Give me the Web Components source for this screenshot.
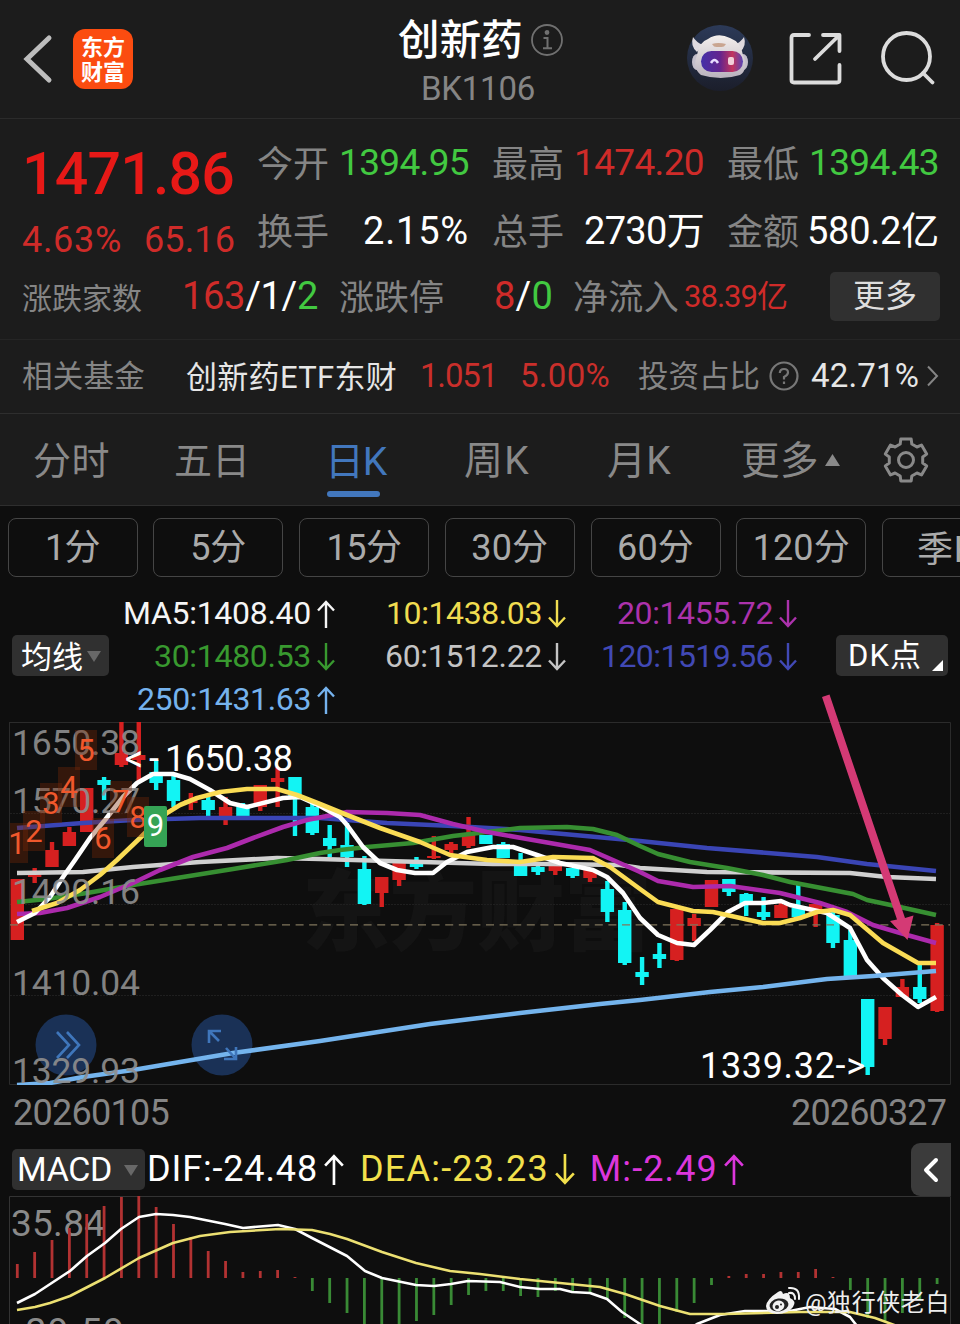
<!DOCTYPE html>
<html lang="zh-CN">
<head>
<meta charset="UTF-8">
<title>创新药 BK1106</title>
<style>
    body {
        margin:0;
        background:#0e0e0e;
        font-family:Roboto, "Noto Sans CJK SC", sans-serif;
        overflow:hidden;
    }
</style>
</head>
<body>
<stock-page></stock-page>

<script>
const define = (name, html, setup) => {
    const template = document.createElement("template");
    template.innerHTML = html.trim();
    customElements.define(name, class extends HTMLElement {
        constructor() {
            super();
            this.attachShadow({ mode: "open" }).append(template.content.cloneNode(true));
        }

        connectedCallback() {
            if (setup) setup(this, this.shadowRoot);
        }
    });
};

// one line of text, tracked out (or in) to the width in "w"
define("fit-text", `
    <style>
        :host { display:block; flex:none; white-space:nowrap; line-height:1.2; }
        span { display:inline-block; vertical-align:top; }
    </style>
    <span><slot></slot></span>
`, (el, root) => {
    const width = Number(el.getAttribute("w"));
    const size = el.getAttribute("size");
    if (size) el.style.fontSize = size + "px";
    // Chinese glyphs sit higher than the digits in a Roboto line box
    if (!/[0-9]/.test(el.textContent) && /[^\x00-\x7f]/.test(el.textContent)) {
        root.querySelector("span").style.transform = "translateY(1.5px)";
    }
    if (!width) return;
    const count = [...el.textContent].length;
    const natural = root.querySelector("span").getBoundingClientRect().width;
    el.style.letterSpacing = (width - natural) / count + "px";
    el.style.width = width + "px";
});

define("app-logo", `
    <style>
        :host {
            display:flex; flex-direction:column; justify-content:center; align-items:center;
            width:60px; height:60px; border-radius:12px; background:#fb4c10; color:#fff;
            font:700 22px/25px "Noto Sans CJK SC", sans-serif;
        }
        span { transform:translateY(-1.500px); }
    </style>
    <span>东方</span><span>财富</span>
`);

define("robot-avatar", `
    <style>:host { display:block; width:66px; height:66px; }</style>
    <svg width="66" height="66" viewBox="0 0 66 66">
        <defs>
            <linearGradient id="sky" x2="0" y2="1"><stop stop-color="#2c3a58"/><stop offset="1" stop-color="#1b1e2b"/></linearGradient>
            <linearGradient id="visor"><stop stop-color="#4430a8"/><stop offset=".45" stop-color="#63248e"/><stop offset=".75" stop-color="#c2345e"/><stop offset="1" stop-color="#5744b4"/></linearGradient>
            <linearGradient id="shell" x2="0" y2="1"><stop stop-color="#f4efed"/><stop offset="1" stop-color="#b9b2bd"/></linearGradient>
        </defs>
        <circle cx="33" cy="33" r="33" fill="url(#sky)"/>
        <path d="M6 12q-3 9 4 15l6-7q-7-3-10-8zM57 12q3 9-4 15l-6-7q7-3 10-8z" fill="#ded9df"/>
        <ellipse cx="10" cy="37" rx="5" ry="8" fill="#c4bfcb"/>
        <ellipse cx="56" cy="37" rx="5" ry="8" fill="#c4bfcb"/>
        <path d="M10 30Q12 17 21 14Q31 7 43 13Q54 17 56 30Q62 44 53 50Q34 56 14 50Q5 43 10 30z" fill="url(#shell)"/>
        <path d="M25 19q6-2 14 0l-2 2.500q-5 1-10 0z" fill="#c9a590"/>
        <rect x="14" y="26" width="42" height="21" rx="10.500" fill="url(#visor)"/>
        <path d="M24 38q3.500-6 7 0" stroke="#e9ddff" stroke-width="2.500" fill="none"/>
        <rect x="41" y="32" width="6" height="8" rx="2" fill="#f2cfd9"/>
    </svg>
`);

define("page-header", `
    <style>
        :host { display:flex; align-items:flex-start; height:118px; background:#1c1c1c; border-bottom:1px solid #2b2b2b; }
        .left { display:flex; padding:29px 0 0 22px; width:376px; box-sizing:border-box; }
        .left svg { margin-right:20px; }
        .title { width:290px; padding-top:13px; }
        .name { display:flex; align-items:center; gap:8px; height:52px; padding-left:22px; color:#fff; font-weight:500; }
        .code { display:flex; height:48px; align-items:center; padding-left:45px; color:#858585; }
        .name svg { margin-top:1px; }
        .right { display:flex; align-items:flex-start; padding:25px 0 0 21px; }
        .share { margin:7px 0 0 36px; }
        .search { margin:5px 0 0 37px; }
    </style>
    <div class="left">
        <svg width="31" height="60" viewBox="0 0 31 60" fill="none" stroke="#bdbdbd" stroke-width="5" stroke-linecap="round"><path d="M27 9L5 30L27 51"/></svg>
        <app-logo></app-logo>
    </div>
    <div class="title">
        <div class="name">
            <fit-text w="125" size="41.500">创新药</fit-text>
            <svg width="32" height="32" viewBox="0 0 32 32" fill="none" stroke="#707070" stroke-width="1.800">
                <circle cx="16" cy="16" r="15"/><path d="M12.500 14h4v10M12 24.300h9" stroke-width="2"/><circle cx="16" cy="8.500" r="1.500" fill="#707070"/>
            </svg>
        </div>
        <div class="code"><fit-text w="114" size="33">BK1106</fit-text></div>
    </div>
    <div class="right">
        <robot-avatar></robot-avatar>
        <svg class="share" width="54" height="54" viewBox="0 0 54 54" fill="none" stroke="#dcdcdc" stroke-width="3.800" stroke-linecap="round" stroke-linejoin="round">
            <path d="M20 3H5Q2.500 3 2.500 5.500V48Q2.500 50.500 5 50.500H48Q50.500 50.500 50.500 48V33M34 3H50.500V19M50 3.500L26 27"/>
        </svg>
        <svg class="search" width="56" height="56" viewBox="0 0 56 56" fill="none" stroke="#dcdcdc" stroke-width="3.800" stroke-linecap="round">
            <circle cx="26.500" cy="26.500" r="23.500"/><path d="M43 43L52.500 52.500"/>
        </svg>
    </div>
`);

define("quote-panel", `
    <style>
        :host { display:block; box-sizing:border-box; height:221px; background:#1c1c1c; border-bottom:1px solid #252525; padding-top:10px; }
        .top { display:flex; height:136px; }
        .price { width:257px; box-sizing:border-box; padding-left:22px; color:#cf2b29; }
        .price > fit-text { height:88px; line-height:89px; font-weight:500; color:#e71917; }
        .change { display:flex; gap:22px; }
        .change fit-text { line-height:47px; }
        .grid { display:grid; grid-template-columns:212px 212px 212px; column-gap:23px; grid-template-rows:69px 68px; align-items:center; }
        .cell { display:flex; justify-content:space-between; align-items:center; }
        .cell fit-text:first-child, .gray { color:#858585; }
        .red { color:#cf2b29; } .green { color:#42c941; } .white { color:#fff; }
        .row { display:flex; align-items:center; height:62px; padding-left:22px; }
        .row > fit-text { margin-top:2px; }
        .more { display:flex; align-items:center; justify-content:center; width:110px; height:49px; margin-left:43px; border-radius:5px; background:#303030; color:#dedede; }
        .more fit-text { margin-top:-3px; }
    </style>
    <div class="top">
        <div class="price">
            <fit-text w="212" size="59">1471.86</fit-text>
            <div class="change"><fit-text w="100" size="36">4.63%</fit-text><fit-text w="91" size="36">65.16</fit-text></div>
        </div>
        <div class="grid">
            <div class="cell"><fit-text w="72" size="36">今开</fit-text><fit-text class="green" w="130" size="37">1394.95</fit-text></div>
            <div class="cell"><fit-text w="72" size="36">最高</fit-text><fit-text class="red" w="130" size="37">1474.20</fit-text></div>
            <div class="cell"><fit-text w="72" size="36">最低</fit-text><fit-text class="green" w="130" size="37">1394.43</fit-text></div>
            <div class="cell"><fit-text w="72" size="36">换手</fit-text><fit-text class="white" w="106" size="38">2.15%</fit-text></div>
            <div class="cell"><fit-text w="72" size="36">总手</fit-text><fit-text class="white" w="120" size="38">2730万</fit-text></div>
            <div class="cell"><fit-text w="72" size="36">金额</fit-text><fit-text class="white" w="132" size="38">580.2亿</fit-text></div>
        </div>
    </div>
    <div class="row">
        <fit-text class="gray" w="120" size="30">涨跌家数</fit-text>
        <fit-text class="white" w="136" size="38" style="margin-left:40px"><span class="red">163</span>/1/<span class="green">2</span></fit-text>
        <fit-text class="gray" w="105" size="35" style="margin-left:21px">涨跌停</fit-text>
        <fit-text class="white" w="59" size="38" style="margin-left:50px"><span class="red">8</span>/<span class="green">0</span></fit-text>
        <fit-text class="gray" w="106" size="35" style="margin-left:20px">净流入</fit-text>
        <fit-text class="red" w="103" size="31" style="margin-left:5px">38.39亿</fit-text>
        <div class="more"><fit-text w="64" size="32">更多</fit-text></div>
    </div>
`);

define("fund-row", `
    <style>
        :host { display:flex; align-items:center; box-sizing:border-box; height:74px; padding:0 0 2px 22px; background:#1c1c1c; border-bottom:1px solid #2e2e2e; color:#858585; }
        .white { color:#e6e6e6; } .red { color:#c92f2b; }
    </style>
    <fit-text w="123" size="30.500">相关基金</fit-text>
    <fit-text class="white" w="211" size="31" style="margin-left:41px">创新药ETF东财</fit-text>
    <fit-text class="red" w="77" size="33" style="margin-left:23px">1.051</fit-text>
    <fit-text class="red" w="90" size="33" style="margin-left:23px">5.00%</fit-text>
    <fit-text w="122" size="30.500" style="margin-left:28px">投资占比</fit-text>
    <svg width="30" height="30" viewBox="0 0 30 30" fill="none" stroke="#777" stroke-width="2.200" style="margin-left:9px">
        <circle cx="15" cy="15" r="13.500"/><path d="M10.800 12Q11 8 15 8Q19 8 19 11.500Q19 14 15 16V18.500"/><path d="M15 20.500V23"/>
    </svg>
    <fit-text class="white" w="108" size="33" style="margin-left:12px">42.71%</fit-text>
    <svg width="12" height="22" viewBox="0 0 12 22" fill="none" stroke="#858585" stroke-width="2" style="margin-left:8px"><path d="M1 1.500L10 11L1 20.500"/></svg>
`);

define("k-tabs", `
    <style>
        :host { display:flex; align-items:center; box-sizing:border-box; height:92px; background:#1c1c1c; border-bottom:1px solid #2e2e2e; padding-left:33px; color:#898989; }
        .on { display:flex; flex-direction:column; color:#4277bd; padding-top:15px; }
        .on i { width:53px; height:6px; border-radius:3px; background:#4277bd; margin-top:8px; }
        .on fit-text { height:46px; margin-left:-2px; }
    </style>
    <fit-text w="77" size="38">分时</fit-text>
    <fit-text w="76" size="38" style="margin-left:64px">五日</fit-text>
    <div class="on" style="margin-left:77px"><fit-text w="61" size="39">日K</fit-text><i></i></div>
    <fit-text w="66" size="39" style="margin-left:78px">周K</fit-text>
    <fit-text w="64" size="39" style="margin-left:77px">月K</fit-text>
    <fit-text w="78" size="38.500" style="margin-left:70px">更多</fit-text>
    <svg width="15" height="12" viewBox="0 0 15 12" style="margin-left:6px"><path d="M7.500 0L15 12H0z" fill="#898989"/></svg>
    <svg width="48" height="48" viewBox="-24 -24 48 48" fill="none" stroke="#898989" stroke-width="3" stroke-linejoin="round" style="margin-left:42px">
        <circle r="7.500"/>
        <path id="gear"/>
    </svg>
`, (el, root) => {
    // six-toothed cog: each tooth is four points on two radii
    let d = "";
    for (let i = 0; i < 6; i++) {
        [[-20, 17], [-14, 21.5], [14, 21.5], [20, 17]].forEach(([a, r]) => {
            const t = (i * 60 + a) * Math.PI / 180;
            d += (d ? "L" : "M") + (Math.sin(t) * r).toFixed(1) + " " + (-Math.cos(t) * r).toFixed(1);
        });
    }
    root.querySelector("#gear").setAttribute("d", d + "z");
});

define("period-bar", `
    <style>
        :host { display:flex; gap:15.750px; padding:12px 0 0 7.500px; overflow:hidden; }
        div { display:flex; flex:none; align-items:center; justify-content:center; box-sizing:border-box; width:130px; height:59px; padding-top:2px; border:1.500px solid #454545; border-radius:8px; color:#aaa; }
    </style>
    <div><fit-text w="55" size="36">1分</fit-text></div>
    <div><fit-text w="56" size="36">5分</fit-text></div>
    <div><fit-text w="75" size="36">15分</fit-text></div>
    <div><fit-text w="77" size="36">30分</fit-text></div>
    <div><fit-text w="77" size="36">60分</fit-text></div>
    <div><fit-text w="97" size="36">120分</fit-text></div>
    <div><fit-text w="60" size="36">季K</fit-text></div>
`);

define("trend-arrow", `
    <style>:host { display:block; flex:none; } svg { display:block; }</style>
    <svg viewBox="0 0 18 28" fill="none" stroke="currentColor" stroke-width="2.400"><path d="M9 28V2M1 10.500L9 2L17 10.500"/></svg>
`, (el, root) => {
    const svg = root.querySelector("svg");
    const size = Number(el.getAttribute("size") || 28);
    svg.setAttribute("height", size);
    svg.setAttribute("width", size * 18 / 28);
    if (el.hasAttribute("down")) svg.style.transform = "rotate(180deg)";
});

define("drop-button", `
    <style>
        :host { display:flex; align-items:center; box-sizing:border-box; height:41px; border-radius:5px; background:#303030; color:#fff; }
        svg { margin:1px 0 0 auto; }
    </style>
    <slot></slot>
    <svg width="14" height="11" viewBox="0 0 14 11"><path d="M0 0H14L7 11z" fill="#686868"/></svg>
`);

define("ma-legend", `
    <style>
        :host { display:flex; box-sizing:border-box; height:145px; padding:15px 12px 0; justify-content:space-between; }
        .btn { margin-top:43px; }
        drop-button { width:97px; padding:0 8px 0 9px; }
        .dk { display:flex; box-sizing:border-box; width:112px; height:41px; padding:0 5px 5px 12px; align-items:center; justify-content:space-between; border-radius:5px; background:#303030; color:#fff; }
        .dk fit-text { padding-top:2px; }
        .dk svg { align-self:flex-end; }
        .grid { display:grid; grid-template-columns:226px 231px 231px; grid-template-rows:43px 43px 43px; width:688px; margin-right:auto; }
        .grid div { display:flex; align-items:center; justify-content:flex-end; gap:6px; }
    </style>
    <drop-button class="btn"><fit-text w="62" size="31">均线</fit-text></drop-button>
    <div class="grid">
        <div style="color:#f5f5f5"><fit-text w="188" size="32">MA5:1408.40</fit-text><trend-arrow></trend-arrow></div>
        <div style="color:#f0dc50"><fit-text w="156" size="32">10:1438.03</fit-text><trend-arrow down></trend-arrow></div>
        <div style="color:#ac32ac"><fit-text w="156" size="32">20:1455.72</fit-text><trend-arrow down></trend-arrow></div>
        <div style="color:#38992f"><fit-text w="157" size="32">30:1480.53</fit-text><trend-arrow down></trend-arrow></div>
        <div style="color:#c4c4c4"><fit-text w="157" size="32">60:1512.22</fit-text><trend-arrow down></trend-arrow></div>
        <div style="color:#4149b5"><fit-text w="172" size="32">120:1519.56</fit-text><trend-arrow down></trend-arrow></div>
        <div style="color:#75b2ed"><fit-text w="174" size="32">250:1431.63</fit-text><trend-arrow></trend-arrow></div>
    </div>
    <div class="dk btn"><fit-text w="74" size="31">DK点</fit-text><svg width="11" height="11"><path d="M11 0V11H0z" fill="#fff"/></svg></div>
`);

const stepX = i => 17.3 + i * 17.355;

// [up, high, bodyTop, bodyBottom, low]
const candles = [
    [1,879,879,940,940],[1,868,874,877,883],[1,842,850,867,867],[1,827,832,846,846],[1,788,788,832,832],
    [0,777,780,785,800],[1,722,753,765,767],[1,722,755,760,782],[0,760,772,783,790],[0,775,780,801,807],
    [1,793,800,803,810],[0,795,800,810,820],[1,797,807,816,825],[0,803,807,818,818],[1,785,785,807,811],
    [1,767,778,782,807],[0,777,777,798,836],[0,803,807,833,835],[0,825,838,846,857],[0,823,845,857,867],
    [0,856,869,904,905],[1,877,877,893,907],[1,863,863,880,886],[0,857,862,867,869],[1,836,856,858,859],
    [1,842,844,850,853],[1,817,833,846,848],[0,835,835,844,844],[0,842,844,858,858],[0,853,863,876,876],
    [0,862,867,872,875],[1,865,865,871,875],[0,868,868,876,878],[1,870,870,878,882],[0,881,889,912,922],
    [0,902,910,963,965],[0,957,972,977,985],[0,943,954,959,968],[1,909,909,960,961],[1,914,918,926,941],
    [1,880,880,907,907],[0,879,879,892,896],[0,893,894,905,916],[0,897,912,917,920],[1,903,905,918,918],
    [0,885,908,917,917],[1,904,904,912,927],[0,912,915,943,948],[0,930,940,976,976],[0,999,999,1067,1075],
    [1,1007,1007,1039,1045],[1,979,987,997,997],[0,965,987,999,1003],[1,923,925,1011,1012]
];

const lines = [
    ["#d0d0d0", "17,873 83,872 133,867 200,862 277,858 320,859 387,861 493,864 553,864 620,865 640,868 707,872 850,873 887,877 936,879"],
    ["#3a45b5", "17,828 83,823 133,820 200,818 320,818 387,823 453,826 520,830 640,841 707,848 817,857 867,864 936,871"],
    ["#378f32", "17,902 47,899 87,893 133,885 183,877 233,869 287,860 320,853 340,850 367,847 413,843 453,836 487,832 520,828 567,827 593,829 617,835 640,846 658,854 690,862 727,868 763,875 790,882 853,894 867,900 900,907 936,915"],
    ["#ac2aac", "17,914 40,913 67,908 100,897 133,883 160,870 193,857 227,848 253,838 283,827 307,820 347,812 387,813 420,815 453,824 487,832 527,839 590,850 613,860 640,872 658,881 693,887 730,886 780,893 820,903 847,912 873,925 907,935 936,943"],
    ["#fff", "17,922 35,913 50,897 63,877 75,860 90,838 105,820 123,797 137,783 153,774 173,774 190,779 210,790 230,803 247,807 283,798 300,797 320,806 340,817 347,825 363,847 380,863 397,870 415,873 433,873 447,862 467,852 493,847 513,847 537,855 560,863 593,870 607,877 623,893 640,918 658,935 677,943 694,945 710,930 728,912 745,903 763,903 781,901 790,905 827,913 850,928 867,960 883,978 902,995 918,1007 936,997"],
    ["#fadc55", "32,911 57,903 80,890 100,875 117,860 140,838 153,825 167,813 180,805 197,798 220,792 247,789 277,789 297,795 320,804 347,815 380,828 420,842 450,855 487,860 520,862 553,857 593,858 610,867 640,889 658,902 693,911 713,912 763,923 780,923 800,918 817,912 833,910 850,915 883,943 918,963 936,963"],
    ["#74b4ed", "17,1085 50,1083 83,1077 133,1070 233,1053 320,1041 430,1024 520,1013 600,1004 640,1000 710,992 763,987 827,979 873,976 936,971"]
];

// TD count marks: digit, centre x, box top
const marks = [[1,17,823],[2,34,811],[3,51,783],[4,69,767],[5,86,730],[6,103,818],[7,121,781],[8,138,797]];

define("k-chart", `
    <style>:host { display:block; height:363px; } svg { display:block; }</style>
    <svg width="960" height="363" viewBox="0 722 960 363">
        <text x="302" y="943" font-size="88" font-weight="900" textLength="350" fill="#141414" font-family="Noto Sans CJK SC">东方财富</text>
        <path d="M9 722.500H950.500V1084.500H9.500V722" fill="none" stroke="#2b2b2b"/>
        <path d="M10 813.500H950M10 904.500H950M10 995.500H950" stroke="#1f1f1f" stroke-dasharray="2 1"/>
        <g fill="#1a3156"><circle cx="66" cy="1045" r="30.500"/><circle cx="222" cy="1045" r="30.500"/></g>
        <g id="candles"></g>
        <path d="M10 924.800H950" stroke="#80765c" stroke-width="1.300" stroke-dasharray="8 5.600"/>
        <g id="lines" fill="none" stroke-width="4.600"></g>
        <g fill="none" stroke="#3f76bb" stroke-width="2.600">
            <path d="M57 1032L69 1045L57 1058M67 1032L79 1045L67 1058"/>
            <path d="M209 1043V1031H221M209.500 1031.500L219 1041M236 1047V1059H224M235.500 1058.500L226 1048"/>
        </g>
        <g fill="#8f8f8f" font-size="35.500" opacity=".9">
            <text x="12" y="755" textLength="128">1650.38</text>
            <text x="12" y="812.500" textLength="128">1570.27</text>
            <text x="12" y="903.500" textLength="128">1490.16</text>
            <text x="12" y="994.500" textLength="128">1410.04</text>
            <text x="12" y="1083" textLength="128">1329.93</text>
        </g>
        <g id="marks" font-size="31" text-anchor="middle" fill="#f0582c"></g>
        <rect x="144" y="806" width="23" height="41" rx="2" fill="#35a355"/>
        <text x="155.500" y="836" font-size="31" text-anchor="middle" fill="#fff">9</text>
        <g fill="#fff" font-size="36">
            <text x="125" y="771">&lt;<tspan x="149">-</tspan><tspan x="165" textLength="128">1650.38</tspan></text>
            <text x="700" y="1078" textLength="165">1339.32-&gt;</text>
        </g>
    </svg>
`, (el, root) => {
    root.querySelector("#candles").innerHTML = candles.map(([up, high, top, bottom, low], i) => {
        const x = stepX(i);
        const color = up ? "#d62020" : "#12f4f4";
        return `<path d="M${x - 2.2} ${high}h4.400V${low}h-4.400zM${x - 6.7} ${top}h13.400V${bottom}h-13.400z" fill="${color}"/>`;
    }).join("");
    root.querySelector("#lines").innerHTML = lines.map(([color, points]) =>
        `<polyline points="${points}" stroke="${color}" stroke-linejoin="round"/>`).join("");
    root.querySelector("#marks").innerHTML = marks.map(([n, x, y]) =>
        `<rect x="${Math.max(10, x - 11)}" y="${y}" width="${x < 20 ? 18 : 22}" height="40" fill="#7a2a08" opacity=".36"/><text x="${x}" y="${y + 31}">${n}</text>`).join("");
});

define("date-axis", `
    <style>:host { display:flex; justify-content:space-between; height:56px; box-sizing:border-box; padding:2px 14px 0 13px; align-items:center; color:#858585; }</style>
    <fit-text w="156" size="36">20260105</fit-text>
    <fit-text w="155" size="36">20260327</fit-text>
`);

define("macd-legend", `
    <style>
        :host { display:flex; align-items:center; height:53px; margin:2px 9px 0 12px; }
        drop-button { box-sizing:border-box; width:133px; padding:0 7px 0 5px; margin-right:2px; }
        trend-arrow { margin-left:6px; }
        .fold { display:flex; align-items:center; justify-content:center; width:40px; height:53px; margin-left:auto; border-radius:9px 0 0 9px; background:#3b3b3b; }
    </style>
    <drop-button><fit-text w="95" size="34">MACD</fit-text></drop-button>
    <fit-text w="171" size="36" style="color:#fff">DIF:-24.48</fit-text><trend-arrow size="31" style="color:#fff"></trend-arrow>
    <fit-text w="189" size="36" style="color:#f2e04c;margin-left:16px">DEA:-23.23</fit-text><trend-arrow down size="31" style="color:#f2e04c"></trend-arrow>
    <fit-text w="128" size="36" style="color:#dc36dc;margin-left:15px">M:-2.49</fit-text><trend-arrow size="31" style="color:#dc36dc"></trend-arrow>
    <div class="fold"><svg width="16" height="26" viewBox="0 0 16 26" fill="none" stroke="#fff" stroke-width="4" stroke-linecap="round" stroke-linejoin="round"><path d="M13 3L3 13L13 23"/></svg></div>
`);

// bar ends; the zero line is at 1278
const bars = [1264,1252,1240,1228,1214,1206,1197,1196,1207,1224,1237,1251,1261,1272,1271,1270,1277,
    1291,1303,1313,1326,1330,1326,1321,1315,1305,1295,1291,1291,1296,1297,1291,1293,1293,1299,1318,1330,1326,1312,1303,1285,
    1276,1274,1274,1272,1272,1269,1277,1290,1318,1322,1313,1300,1284];

define("macd-chart", `
    <style>:host { display:block; height:128px; overflow:hidden; } svg { display:block; }</style>
    <svg width="960" height="128" viewBox="0 1196 960 128">
        <path d="M9.500 1324V1196.500H950.500V1324" fill="none" stroke="#333"/>
        <g fill="#8a8a8a" font-size="37">
            <text x="11" y="1236" textLength="94">35.84</text>
            <text x="14" y="1344" textLength="110">-29.59</text>
        </g>
        <g id="bars"></g>
        <g fill="none" stroke-width="2.600" stroke-linejoin="round">
            <polyline stroke="#fff" points="17,1303 35,1294 70,1271 87,1256 105,1243 121,1229 139,1217 156,1214 173,1215 190,1217 225,1224 243,1228 278,1225 295,1229 312,1238 347,1256 365,1271 382,1278 416,1285 434,1286 451,1284 468,1281 500,1282 520,1287 540,1289 560,1289 572,1292 590,1293 607,1299 622,1312 640,1324 660,1340 680,1335 697,1324 720,1315 745,1311 790,1311 810,1307 835,1309 850,1317 857,1326"/>
            <polyline stroke="#ece072" points="17,1310 35,1307 50,1303 70,1296 105,1278 139,1258 173,1243 200,1236 230,1232 280,1229 312,1230 330,1234 347,1239 382,1252 416,1263 450,1271 480,1274 520,1279 560,1283 600,1287 625,1294 660,1306 690,1314 725,1314 800,1312 850,1312 875,1318 897,1326"/>
        </g>
    </svg>
`, (el, root) => {
    root.querySelector("#bars").innerHTML = bars.map((y, i) =>
        `<path d="M${stepX(i)} 1278V${y}" stroke="${y < 1278 ? "#b23232" : "#398a35"}" stroke-width="2.800"/>`).join("");
});

define("author-mark", `
    <style>:host { display:flex; align-items:center; gap:4px; color:#eee; }</style>
    <svg width="36" height="30" viewBox="0 0 36 30">
        <path d="M13 6Q17 3 18 8Q25 5 25 12Q32 15 28 21Q23 28 12 28Q1 27 1 20Q2 13 13 6z" fill="#f2f2f2"/>
        <ellipse cx="14" cy="19" rx="9.500" ry="6.500" transform="rotate(-8 14 19)" fill="#222"/>
        <ellipse cx="13.500" cy="20" rx="6" ry="5.200" transform="rotate(-15 13 20)" fill="#f2f2f2"/>
        <circle cx="12" cy="21" r="2" fill="#222"/><circle cx="16" cy="18.500" r="1" fill="#222"/>
        <path d="M24 7Q30 6 30 13M24 2Q35 1 34 13" fill="none" stroke="#f2f2f2" stroke-width="2" stroke-linecap="round"/>
    </svg>
    <fit-text w="145" size="24">@独行侠老白</fit-text>
`);

define("stock-page", `
    <style>
        :host { display:flex; flex-direction:column; position:relative; width:960px; height:1324px; overflow:hidden; }
        :host > * { flex:none; }
        .pointer { position:absolute; left:815px; top:690px; }
        author-mark { position:absolute; right:10px; bottom:8px; }
    </style>
    <page-header></page-header>
    <quote-panel></quote-panel>
    <fund-row></fund-row>
    <k-tabs></k-tabs>
    <period-bar></period-bar>
    <ma-legend></ma-legend>
    <k-chart></k-chart>
    <date-axis></date-axis>
    <macd-legend></macd-legend>
    <macd-chart></macd-chart>
    <svg class="pointer" width="110" height="255" viewBox="815 690 110 255">
        <path d="M822 697L829.500 694.500L905 918L913.500 915.500L907.500 940L890 921L897 919.500z" fill="#d43a75"/>
    </svg>
    <author-mark></author-mark>
`);
</script>
</body>
</html>
